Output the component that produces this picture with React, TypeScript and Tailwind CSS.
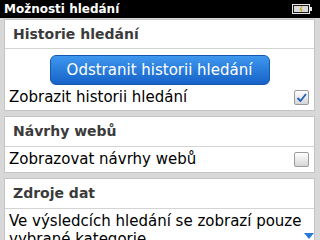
import React from "react";

const font = { fontFamily: '"DejaVu Sans", "Liberation Sans", sans-serif' };

const Checkbox = ({ checked }: { checked: boolean }) => (
  <div className="w-[15px] h-[15px] rounded-[2px] border border-[#9a9a9a] bg-gradient-to-b from-[#ffffff] to-[#d6d6d6] flex items-center justify-center">
    {checked && (
      <svg width="13" height="13" viewBox="0 0 13 13">
        <path d="M2.5 7 L5.5 10 L11 3" fill="none" stroke="#1f5fb8" strokeWidth="1.8" />
      </svg>
    )}
  </div>
);

const Battery = () => (
  <svg width="20" height="10" viewBox="0 0 20 10">
    <rect x="0.5" y="0.5" width="17" height="9" fill="#1a1a1a" stroke="#e8e8e8" />
    <rect x="2" y="2" width="14" height="6" fill="#d8d8d8" />
    <rect x="18" y="3" width="2" height="4" fill="#e8e8e8" />
    <path d="M10 2 L8 5.5 L10 5.5 L9 8" fill="none" stroke="#c9a400" strokeWidth="1" />
  </svg>
);

const Header = ({ title }: { title: string }) => (
  <div className="h-[29px] flex items-center px-[8px] border-b border-[#d4d4d4] text-[14px] font-bold text-[#3b3b3b]">
    {title}
  </div>
);

export default function App() {
  return (
    <div className="w-[320px] h-[240px] overflow-hidden bg-[#d8d8d8] relative" style={font}>
      <div className="h-[18px] bg-black flex items-center justify-between pl-[4px] pr-[8px]">
        <span className="text-white text-[12px] font-bold">Možnosti hledání</span>
        <Battery />
      </div>
      <div className="flex flex-col gap-[5px] pl-[4px] pr-[5px] pt-[1px]">
        <div className="bg-white border border-[#c4c4c4]">
          <Header title="Historie hledání" />
          <div className="flex justify-center pt-[6px]">
            <div className="w-[220px] h-[30px] rounded-[6px] bg-gradient-to-b from-[#3f97ee] to-[#1562c9] border border-[#1458b0] flex items-center justify-center text-white text-[15px]">
              Odstranit historii hledání
            </div>
          </div>
          <div className="h-[25px] flex items-center justify-between pl-[4px] pr-[5px]">
            <span className="text-[15px] text-black">Zobrazit historii hledání</span>
            <Checkbox checked />
          </div>
        </div>
        <div className="bg-white border border-[#c4c4c4]">
          <div className="h-[30px] flex items-center px-[8px] border-b border-[#d4d4d4] text-[14px] font-bold text-[#3b3b3b]">
            Návrhy webů
          </div>
          <div className="h-[25px] flex items-center justify-between pl-[4px] pr-[5px]">
            <span className="text-[15px] text-black">Zobrazovat návrhy webů</span>
            <Checkbox checked={false} />
          </div>
        </div>
        <div className="bg-white border border-[#c4c4c4]">
          <div className="h-[30px] flex items-center px-[8px] border-b border-[#d4d4d4] text-[14px] font-bold text-[#3b3b3b]">
            Zdroje dat
          </div>
          <div className="pl-[4px] pr-[5px] pt-[3px] text-[15px] leading-[18px] text-black">
            Ve výsledcích hledání se zobrazí pouze vybrané kategorie
          </div>
        </div>
      </div>
      <svg className="absolute right-[6px] bottom-[1px]" width="10" height="6" viewBox="0 0 10 6">
        <path d="M0 0 L10 0 L5 6 Z" fill="#2a7bd8" />
      </svg>
    </div>
  );
}
